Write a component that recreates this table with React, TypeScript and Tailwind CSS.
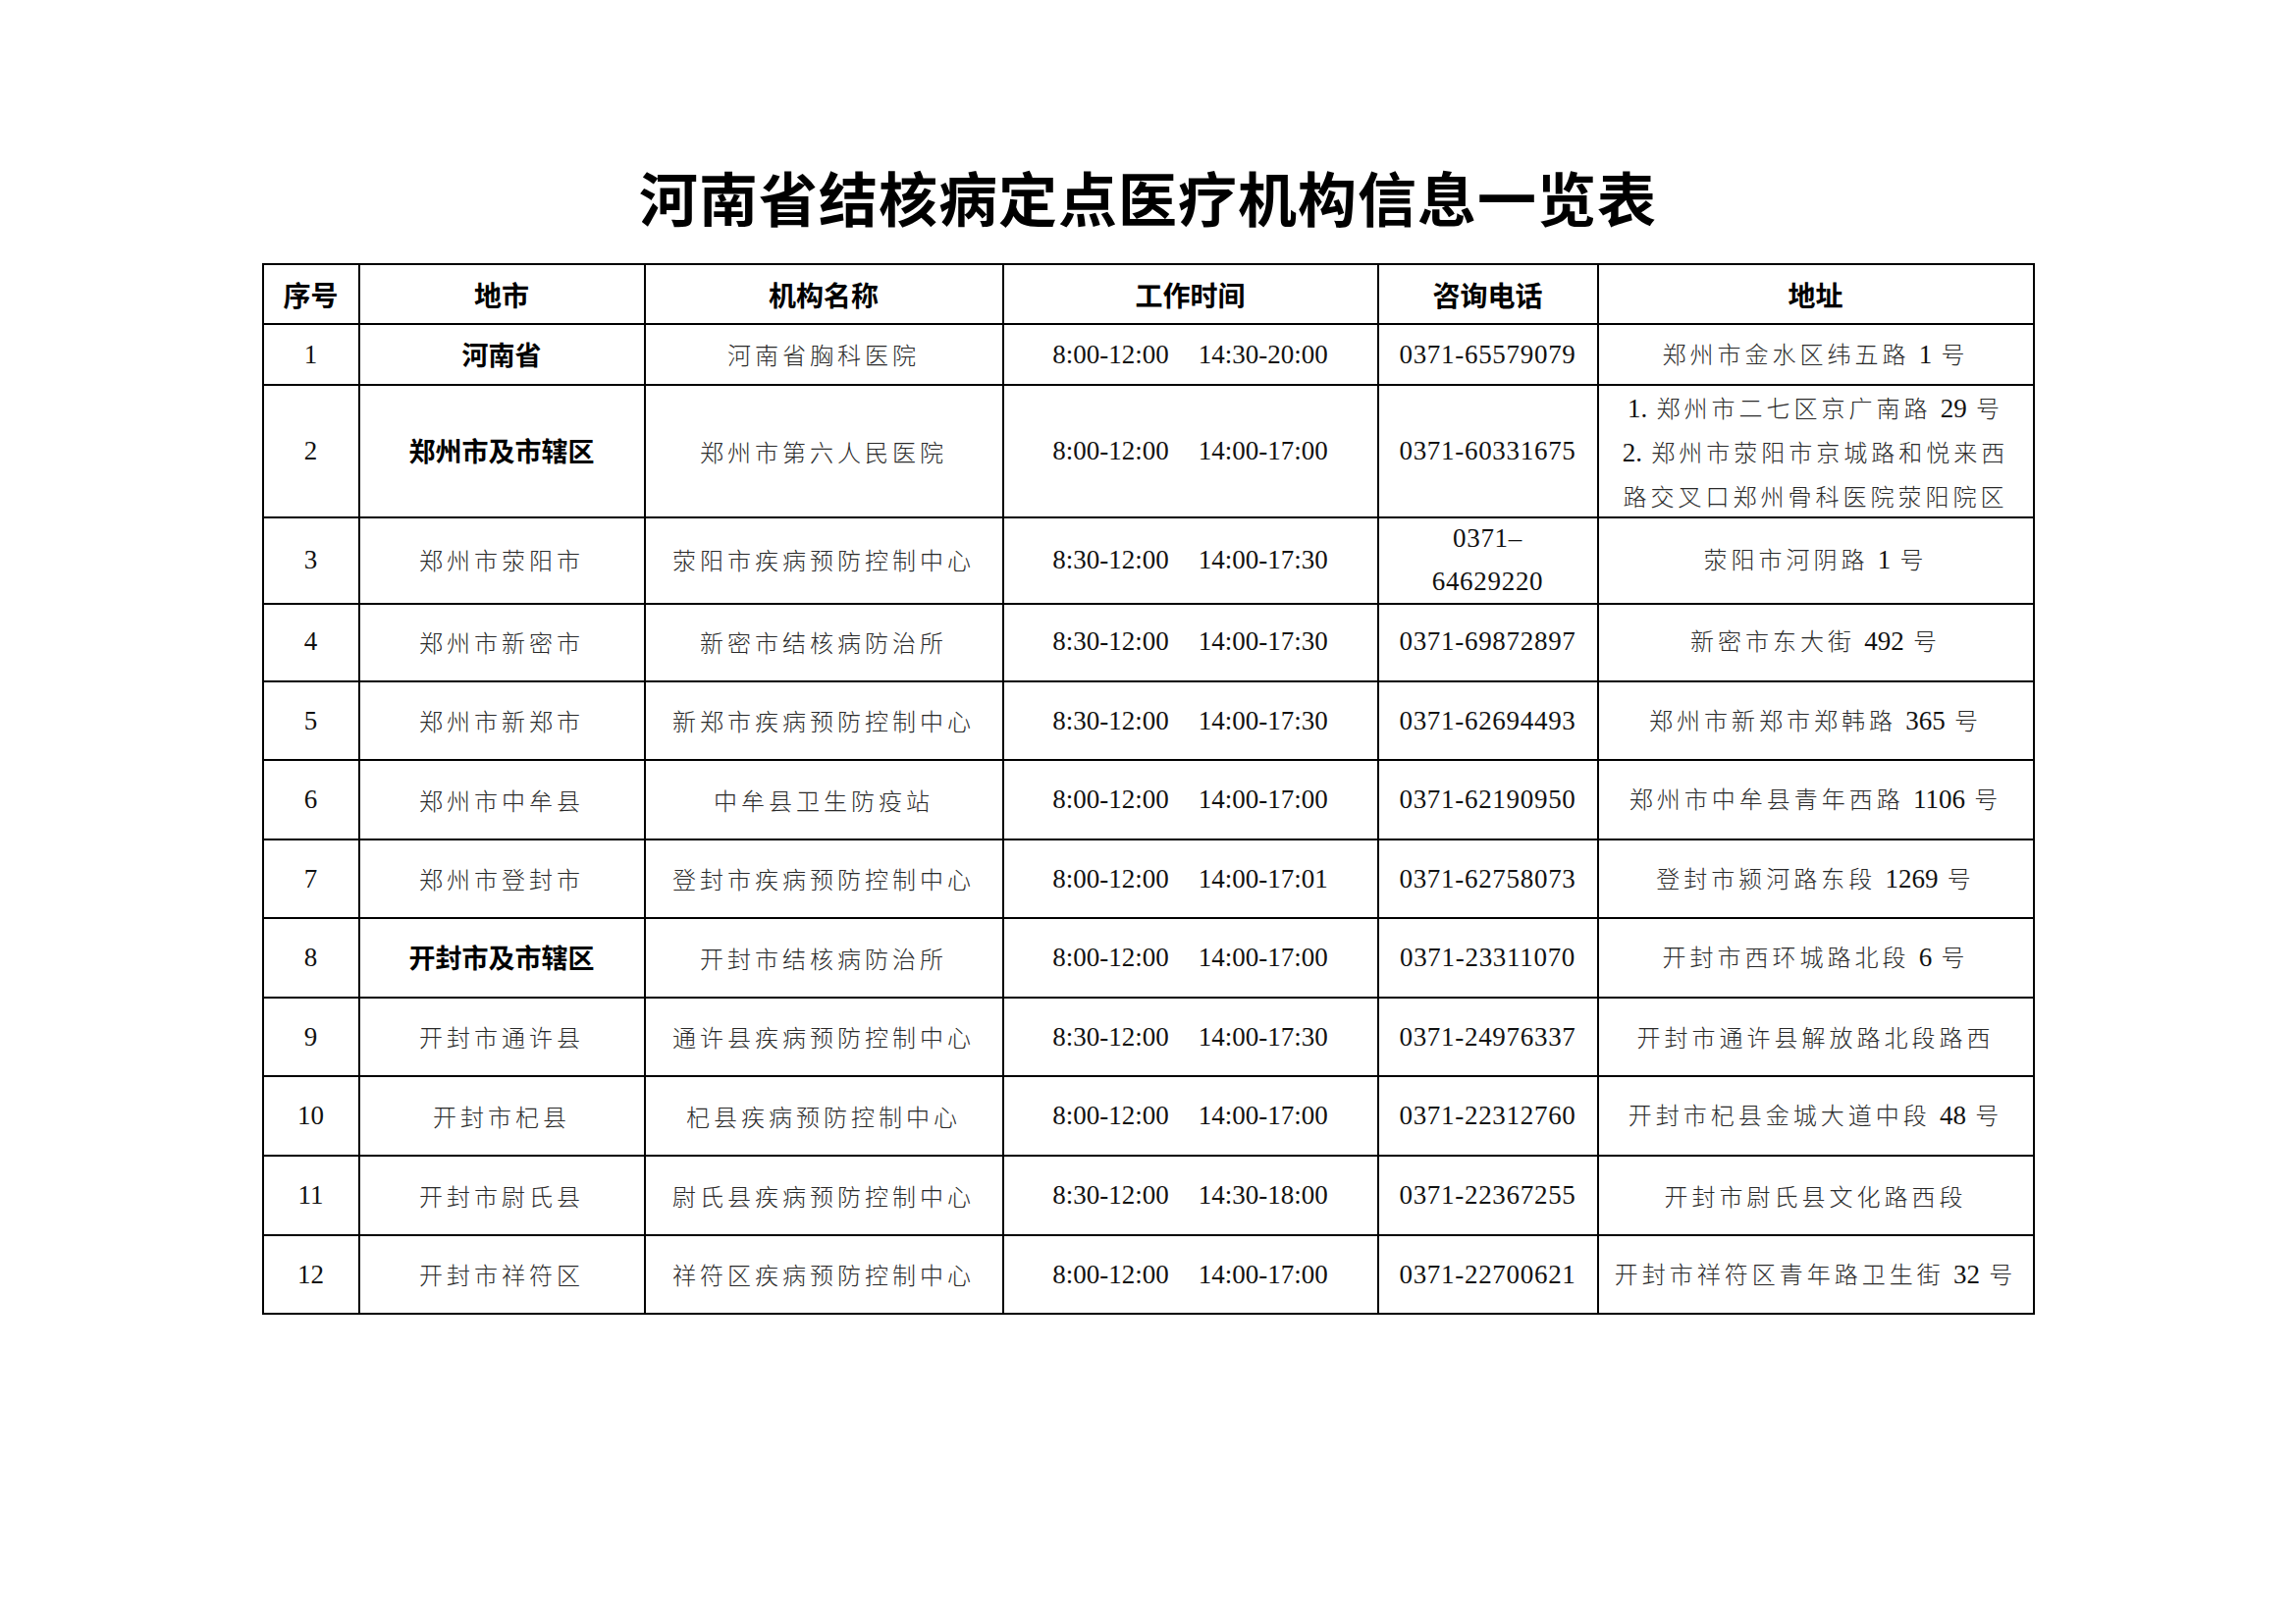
import React from "react";

type Row = {
  no: string;
  city: string;
  cityBold?: boolean;
  org: string;
  t1: string;
  t2: string;
  phone: React.ReactNode;
  addr: React.ReactNode;
  h: string;
};

const CJK = '"Noto Sans CJK SC", sans-serif';
const SERIF = '"Liberation Serif", "Noto Sans CJK SC", serif';

function Zh({ text }: { text: string }) {
  const parts = text.split(/(\d+\.?)/);
  return (
    <>
      {parts.map((p, i) =>
        /\d/.test(p) ? (
          <span key={i} className="font-normal tracking-normal text-[#111] text-[27px]" style={{ fontFamily: SERIF }}>
            {p}
          </span>
        ) : (
          <span key={i}>{p}</span>
        )
      )}
    </>
  );
}

const rows: Row[] = [
  { no: "1", city: "河南省", cityBold: true, org: "河南省胸科医院", t1: "8:00-12:00", t2: "14:30-20:00", phone: "0371-65579079", addr: "郑州市金水区纬五路 1 号", h: "h-[62px]" },
  {
    no: "2",
    city: "郑州市及市辖区",
    cityBold: true,
    org: "郑州市第六人民医院",
    t1: "8:00-12:00",
    t2: "14:00-17:00",
    phone: "0371-60331675",
    addr: (
      <div className="flex flex-col items-center leading-[43px]">
        <div><Zh text="1. 郑州市二七区京广南路 29 号" /></div>
        <div><Zh text="2. 郑州市荥阳市京城路和悦来西" /></div>
        <div><Zh text="路交叉口郑州骨科医院荥阳院区" /></div>
      </div>
    ),
    h: "h-[133px]",
  },
  {
    no: "3",
    city: "郑州市荥阳市",
    org: "荥阳市疾病预防控制中心",
    t1: "8:30-12:00",
    t2: "14:00-17:30",
    phone: (
      <div className="flex flex-col items-center leading-[44px]">
        <div>0371–</div>
        <div>64629220</div>
      </div>
    ),
    addr: "荥阳市河阴路 1 号",
    h: "h-[88px]",
  },
  { no: "4", city: "郑州市新密市", org: "新密市结核病防治所", t1: "8:30-12:00", t2: "14:00-17:30", phone: "0371-69872897", addr: "新密市东大街 492 号", h: "h-[81px]" },
  { no: "5", city: "郑州市新郑市", org: "新郑市疾病预防控制中心", t1: "8:30-12:00", t2: "14:00-17:30", phone: "0371-62694493", addr: "郑州市新郑市郑韩路 365 号", h: "h-[80px]" },
  { no: "6", city: "郑州市中牟县", org: "中牟县卫生防疫站", t1: "8:00-12:00", t2: "14:00-17:00", phone: "0371-62190950", addr: "郑州市中牟县青年西路 1106 号", h: "h-[81px]" },
  { no: "7", city: "郑州市登封市", org: "登封市疾病预防控制中心", t1: "8:00-12:00", t2: "14:00-17:01", phone: "0371-62758073", addr: "登封市颍河路东段 1269 号", h: "h-[80px]" },
  { no: "8", city: "开封市及市辖区", cityBold: true, org: "开封市结核病防治所", t1: "8:00-12:00", t2: "14:00-17:00", phone: "0371-23311070", addr: "开封市西环城路北段 6 号", h: "h-[81px]" },
  { no: "9", city: "开封市通许县", org: "通许县疾病预防控制中心", t1: "8:30-12:00", t2: "14:00-17:30", phone: "0371-24976337", addr: "开封市通许县解放路北段路西", h: "h-[80px]" },
  { no: "10", city: "开封市杞县", org: "杞县疾病预防控制中心", t1: "8:00-12:00", t2: "14:00-17:00", phone: "0371-22312760", addr: "开封市杞县金城大道中段 48 号", h: "h-[81px]" },
  { no: "11", city: "开封市尉氏县", org: "尉氏县疾病预防控制中心", t1: "8:30-12:00", t2: "14:30-18:00", phone: "0371-22367255", addr: "开封市尉氏县文化路西段", h: "h-[81px]" },
  { no: "12", city: "开封市祥符区", org: "祥符区疾病预防控制中心", t1: "8:00-12:00", t2: "14:00-17:00", phone: "0371-22700621", addr: "开封市祥符区青年路卫生街 32 号", h: "h-[80px]" },
];

const GRID = "grid grid-cols-[98px_291px_365px_382px_224px_444px]";
const CELL = "flex items-center justify-center border-r-2 border-b-2 border-black text-center";

export default function App() {
  const zhBody = "text-[24px] tracking-[4px] font-light text-[#2a2a2a]";
  const num = "text-[27px] text-[#111]";
  return (
    <div className="w-[2339px] h-[1654px] bg-white flex flex-col items-center pt-[170px]" style={{ fontFamily: CJK }}>
      <h1 className="text-[60px] leading-[60px] font-bold tracking-[1px] text-black" style={{ fontFamily: CJK }}>
        河南省结核病定点医疗机构信息一览表
      </h1>
      <div className="mt-[38px] w-[1806px] border-l-2 border-t-2 border-black">
        <div className={`${GRID} h-[61px] text-[28px] font-bold text-black`}>
          <div className={CELL}>序号</div>
          <div className={CELL}>地市</div>
          <div className={CELL}>机构名称</div>
          <div className={CELL}>工作时间</div>
          <div className={CELL}>咨询电话</div>
          <div className={CELL}>地址</div>
        </div>
        {rows.map((r) => (
          <div key={r.no} className={`${GRID} ${r.h}`}>
            <div className={`${CELL} ${num}`} style={{ fontFamily: SERIF }}>
              {r.no}
            </div>
            <div className={CELL}>
              {r.cityBold ? (
                <span className="text-[27px] font-bold text-black">{r.city}</span>
              ) : (
                <span className={zhBody}>{r.city}</span>
              )}
            </div>
            <div className={CELL}>
              <span className={zhBody}>{r.org}</span>
            </div>
            <div className={`${CELL} ${num}`} style={{ fontFamily: SERIF }}>
              <span>{r.t1}</span>
              <span className="ml-[30px]">{r.t2}</span>
            </div>
            <div className={`${CELL} ${num} tracking-[0.7px]`} style={{ fontFamily: SERIF }}>
              {r.phone}
            </div>
            <div className={CELL}>
              <span className={zhBody}>{typeof r.addr === "string" ? <Zh text={r.addr} /> : r.addr}</span>
            </div>
          </div>
        ))}
      </div>
    </div>
  );
}
